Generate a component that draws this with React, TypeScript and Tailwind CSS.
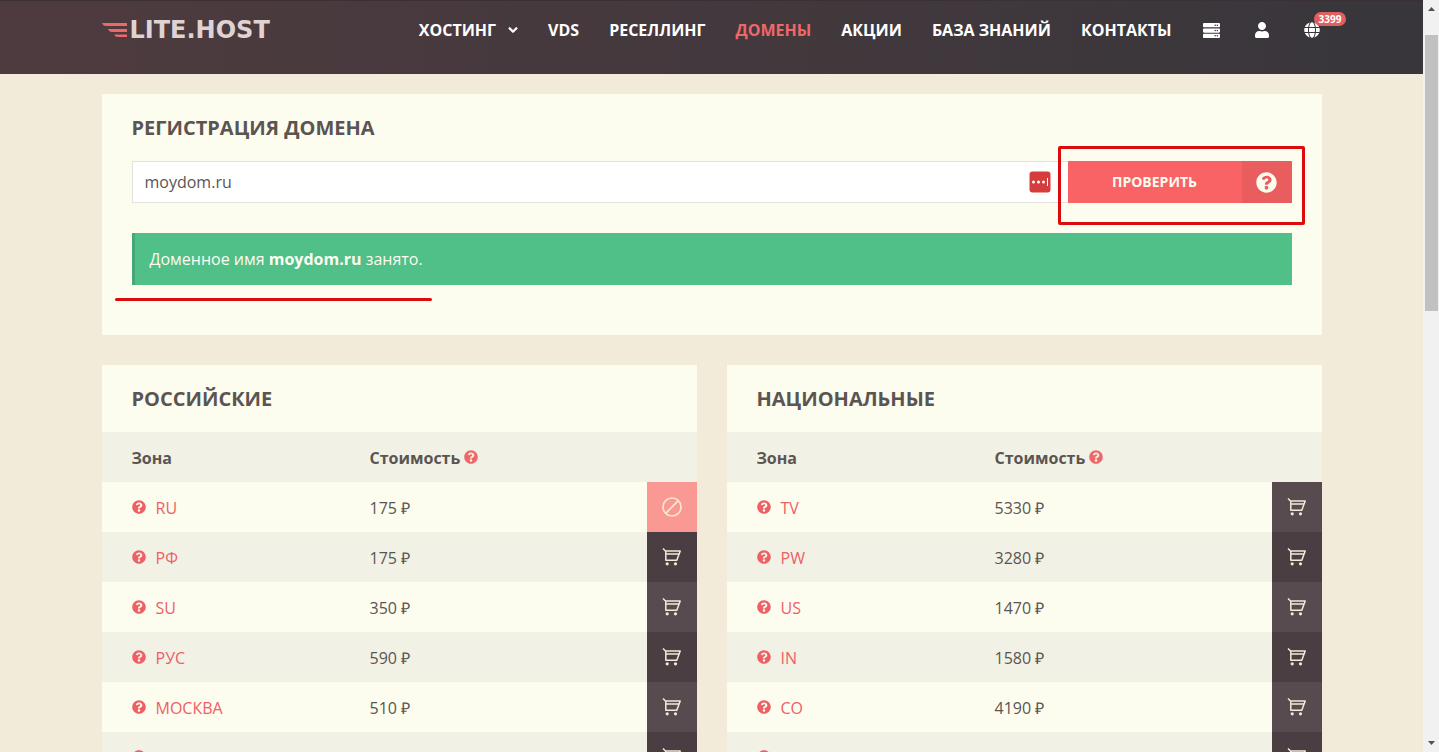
import { useState } from "react";
import {
  FaChevronDown,
  FaGlobe,
  FaQuestionCircle,
  FaServer,
  FaUser,
} from "react-icons/fa";

type Zone = {
  name: string;
  price: string;
  disabled?: boolean;
};

const links = [
  { label: "ХОСТИНГ", dropdown: true },
  { label: "VDS" },
  { label: "РЕСЕЛЛИНГ" },
  { label: "ДОМЕНЫ", active: true },
  { label: "АКЦИИ" },
  { label: "БАЗА ЗНАНИЙ" },
  { label: "КОНТАКТЫ" },
];

const russianZones: Zone[] = [
  { name: "RU", price: "175 ₽", disabled: true },
  { name: "РФ", price: "175 ₽" },
  { name: "SU", price: "350 ₽" },
  { name: "РУС", price: "590 ₽" },
  { name: "МОСКВА", price: "510 ₽" },
  { name: "", price: "" },
];

const nationalZones: Zone[] = [
  { name: "TV", price: "5330 ₽" },
  { name: "PW", price: "3280 ₽" },
  { name: "US", price: "1470 ₽" },
  { name: "IN", price: "1580 ₽" },
  { name: "CO", price: "4190 ₽" },
  { name: "", price: "" },
];

const Logo = () => (
  <a href="#" className="flex items-center gap-0.5 text-[#ddd3d2]">
    <svg width="26" height="14" viewBox="0 0 26 14" fill="#ee6769">
      <path d="M0 0H25V3H4Q1 3 0 0Z" />
      <path d="M6 6H25V9H10Q7 9 6 6Z" />
      <path d="M12 11.5H25V14H16Q13 14 12 11.5Z" />
    </svg>
    <span className="font-['DejaVu_Sans',sans-serif] font-bold text-2xl leading-6">
      LITE.HOST
    </span>
  </a>
);

const CartIcon = () => (
  <svg width="20" height="20" viewBox="0 0 20 20" fill="none">
    <g stroke="currentColor" strokeWidth="1.5" strokeLinejoin="round">
      <path d="M1 1.5L3.5 4H18.2L14.8 13.2H3.8V4" />
      <path d="M4 7H17" />
    </g>
    <circle cx="5.2" cy="16.8" r="1.6" fill="currentColor" />
    <circle cx="13.5" cy="16.8" r="1.6" fill="currentColor" />
  </svg>
);

const BanIcon = () => (
  <svg
    width="20"
    height="20"
    viewBox="0 0 20 20"
    fill="none"
    stroke="currentColor"
    strokeWidth="1.7"
  >
    <circle cx="10" cy="10" r="9" />
    <path d="M3.7 16.3L16.3 3.7" />
  </svg>
);

const Header = () => (
  <header className="h-[74px] border-t border-[#3b3034] bg-gradient-to-r from-[#4e3b3f] to-[#38363b]">
    <div className="max-w-[1220px] mx-auto h-[58px] flex items-center justify-between">
      <Logo />
      <nav className="flex items-center gap-[30px] text-base font-bold text-white">
        {links.map((link) => (
          <a
            key={link.label}
            href="#"
            className={
              link.active
                ? "text-[#ee6769]"
                : "flex items-center gap-3 hover:text-[#ee6769]"
            }
          >
            {link.label}
            {link.dropdown && (
              <FaChevronDown
                size={10}
                stroke="currentColor"
                strokeWidth={40}
              />
            )}
          </a>
        ))}
        <a href="#" aria-label="Серверы" className="w-5 flex justify-center">
          <FaServer size={17} />
        </a>
        <a href="#" aria-label="Профиль" className="w-5 flex justify-center">
          <FaUser size={16} />
        </a>
        <a
          href="#"
          aria-label="Язык"
          className="relative w-5 flex justify-center"
        >
          <FaGlobe size={16} />
          <span className="absolute -top-2.5 left-3 h-3.5 px-[5px] rounded-full bg-[#e06062] text-[10px] leading-3.5">
            3399
          </span>
        </a>
      </nav>
    </div>
  </header>
);

const DomainSearch = () => {
  const [domain, setDomain] = useState("moydom.ru");

  return (
    <section className="bg-[#fcfcef] px-[30px] pt-5 pb-[50px]">
      <h2 className="text-xl leading-7 font-bold text-[#5b5552]">
        <label htmlFor="domain">РЕГИСТРАЦИЯ ДОМЕНА</label>
      </h2>

      <form
        onSubmit={(e) => e.preventDefault()}
        className="mt-[19px] h-[42px] flex"
      >
        <div className="flex-1 flex items-center bg-white border border-r-0 border-[#e3e3d9] pl-3 pr-[17px]">
          <input
            id="domain"
            type="text"
            value={domain}
            onChange={(e) => setDomain(e.target.value)}
            className="flex-1 bg-transparent outline-none text-base text-[#5b5552]"
          />
          {/* Password manager badge */}
          <svg width="22" height="22" viewBox="0 0 22 22">
            <rect x="0.5" y="0.5" width="21" height="21" rx="3" fill="#d63c3c" />
            <g fill="#fff">
              <circle cx="4.5" cy="11" r="1.5" />
              <circle cx="9.5" cy="11" r="1.5" />
              <circle cx="14.5" cy="11" r="1.5" />
              <rect x="18" y="7" width="1" height="8" />
            </g>
          </svg>
        </div>
        <div className="relative flex">
          <button
            type="submit"
            className="w-[174px] bg-[#fa6366] text-sm font-bold text-[#fcfcef]"
          >
            ПРОВЕРИТЬ
          </button>
          <button
            type="button"
            aria-label="Помощь"
            className="w-[50px] bg-[#ea5d5e] flex items-center justify-center text-[#fcfcef]"
          >
            <FaQuestionCircle size={21} />
          </button>
          <div className="absolute -left-2.5 -right-[13px] -top-[15px] -bottom-[22px] border-3 border-[#dd0c0c] rounded-xs pointer-events-none" />
        </div>
      </form>

      <div className="relative mt-[30px] h-[52px] flex items-center bg-[#51bf88] border-l-3 border-[#45a877] pl-[15px] text-base text-[#fcfcef]">
        <p>
          Доменное имя <b>moydom.ru</b> занято.
        </p>
        <div className="absolute -left-5 -bottom-4 w-[317px] h-[3px] rounded-full bg-[#dd0c0c]" />
      </div>
    </section>
  );
};

const ZoneTable = ({ title, zones }: { title: string; zones: Zone[] }) => (
  <section className="bg-[#fcfcef]">
    <h2 className="px-[30px] pt-5 pb-[19px] text-xl leading-7 font-bold text-[#5b5552]">
      {title}
    </h2>
    <table className="w-full table-fixed text-left text-base text-[#5b5552]">
      <thead>
        <tr className="h-[50px] bg-[#f1f1e6]">
          <th className="w-2/5 px-[30px] pt-0.5 font-bold">Зона</th>
          <th className="px-[30px] pt-0.5 font-bold">
            <span className="flex items-center gap-1">
              Стоимость
              <FaQuestionCircle size={14} className="mb-0.5 text-[#ee6769]" />
            </span>
          </th>
          <th className="w-[50px]" />
        </tr>
      </thead>
      <tbody>
        {zones.map((zone, i) => (
          <tr key={i} className="h-[50px] even:bg-[#f1f1e6] group">
            <td className="px-[30px] pt-0.5">
              <a href="#" className="flex items-center gap-2.5 text-[#ee6065]">
                <FaQuestionCircle size={14} className="mb-0.5" />
                {zone.name}
              </a>
            </td>
            <td className="px-[30px] pt-0.5">{zone.price}</td>
            <td className="p-0">
              <button
                type="button"
                disabled={zone.disabled}
                aria-label="В корзину"
                className={
                  zone.disabled
                    ? "w-[50px] h-[50px] flex items-center justify-center bg-[#fa9893] text-[#f9e7d2]"
                    : "w-[50px] h-[50px] flex items-center justify-center bg-[#574b50] group-even:bg-[#4a3e43] text-[#f3ebd9]"
                }
              >
                {zone.disabled ? <BanIcon /> : <CartIcon />}
              </button>
            </td>
          </tr>
        ))}
      </tbody>
    </table>
  </section>
);

const Scrollbar = () => (
  <div className="w-4 flex flex-col items-center bg-[#f1f1f1] py-[7px]">
    <svg width="7" height="4" viewBox="0 0 7 4" fill="#505050">
      <path d="M0 4L3.5 0L7 4Z" />
    </svg>
    <div className="mt-6 w-[13px] h-[276px] bg-[#c1c1c1]" />
    <svg
      width="7"
      height="4"
      viewBox="0 0 7 4"
      fill="#505050"
      className="mt-auto"
    >
      <path d="M0 0L3.5 4L7 0Z" />
    </svg>
  </div>
);

const App = () => {
  return (
    <div className="h-screen flex overflow-hidden bg-[#f3ebd9] font-['Open_Sans',sans-serif]">
      <div className="flex-1 overflow-hidden">
        <Header />
        <main className="max-w-[1220px] mx-auto pt-5">
          <DomainSearch />
          <div className="mt-[30px] grid grid-cols-2 gap-[30px]">
            <ZoneTable title="РОССИЙСКИЕ" zones={russianZones} />
            <ZoneTable title="НАЦИОНАЛЬНЫЕ" zones={nationalZones} />
          </div>
        </main>
      </div>
      <Scrollbar />
    </div>
  );
};

export default App;
